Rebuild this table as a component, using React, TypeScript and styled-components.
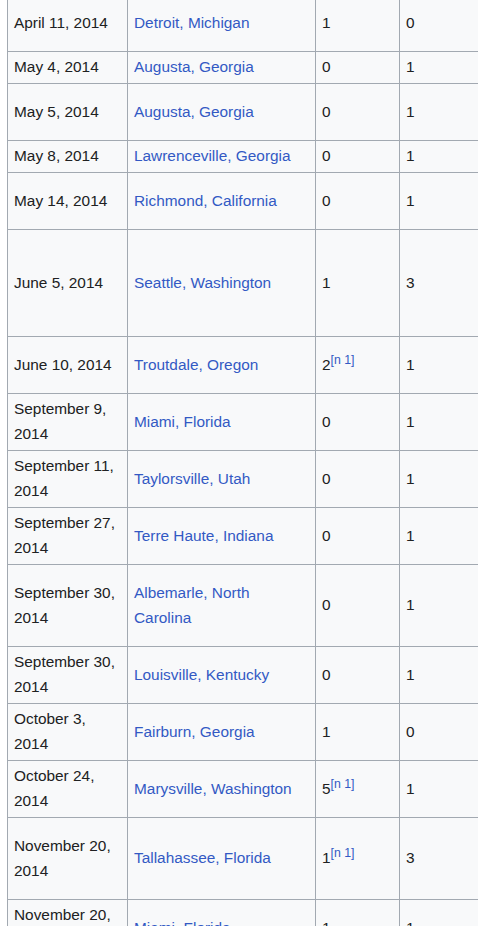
import React from 'react';
import styled, { createGlobalStyle } from 'styled-components';

const colorPalette = {
  text: '#202122',
  link: '#3359c4',
  cell: '#f8f9fa',
  border: '#a2a9b1',
};

type Incident = {
  date: string;
  place: string;
  killed: number;
  killedNote?: boolean;
  injured: number;
  height: number;
};

const incidents: Incident[] = [
  { date: 'April 11, 2014', place: 'Detroit, Michigan', killed: 1, injured: 0, height: 57 },
  { date: 'May 4, 2014', place: 'Augusta, Georgia', killed: 0, injured: 1, height: 32 },
  { date: 'May 5, 2014', place: 'Augusta, Georgia', killed: 0, injured: 1, height: 57 },
  { date: 'May 8, 2014', place: 'Lawrenceville, Georgia', killed: 0, injured: 1, height: 32 },
  { date: 'May 14, 2014', place: 'Richmond, California', killed: 0, injured: 1, height: 57 },
  { date: 'June 5, 2014', place: 'Seattle, Washington', killed: 1, injured: 3, height: 107 },
  { date: 'June 10, 2014', place: 'Troutdale, Oregon', killed: 2, killedNote: true, injured: 1, height: 57 },
  { date: 'September 9, 2014', place: 'Miami, Florida', killed: 0, injured: 1, height: 57 },
  { date: 'September 11, 2014', place: 'Taylorsville, Utah', killed: 0, injured: 1, height: 57 },
  { date: 'September 27, 2014', place: 'Terre Haute, Indiana', killed: 0, injured: 1, height: 57 },
  { date: 'September 30, 2014', place: 'Albemarle, North Carolina', killed: 0, injured: 1, height: 82 },
  { date: 'September 30, 2014', place: 'Louisville, Kentucky', killed: 0, injured: 1, height: 57 },
  { date: 'October 3, 2014', place: 'Fairburn, Georgia', killed: 1, injured: 0, height: 57 },
  { date: 'October 24, 2014', place: 'Marysville, Washington', killed: 5, killedNote: true, injured: 1, height: 57 },
  { date: 'November 20, 2014', place: 'Tallahassee, Florida', killed: 1, killedNote: true, injured: 3, height: 82 },
  { date: 'November 20, 2014', place: 'Miami, Florida', killed: 1, injured: 1, height: 57 },
];

const GlobalStyle = createGlobalStyle`
  html, body {
    margin: 0;
    padding: 0;
    background: #ffffff;
  }
`;

export default function App() {
  return (
    <>
      <GlobalStyle />
      <Viewport>
        <Table>
          <colgroup>
            <col style={{ width: 120 }} />
            <col style={{ width: 188 }} />
            <col style={{ width: 84 }} />
            <col style={{ width: 140 }} />
          </colgroup>
          <tbody>
            {incidents.map((incident, index) => (
              <Row key={index} $height={incident.height}>
                <Cell>{incident.date}</Cell>
                <Cell>
                  <WikiLink href="#">{incident.place}</WikiLink>
                </Cell>
                <Cell>
                  {incident.killed}
                  {incident.killedNote && (
                    <Reference>
                      <WikiLink href="#">[n 1]</WikiLink>
                    </Reference>
                  )}
                </Cell>
                <Cell>{incident.injured}</Cell>
              </Row>
            ))}
          </tbody>
        </Table>
      </Viewport>
    </>
  );
}

const Viewport = styled.div`
  width: 478px;
  height: 926px;
  overflow: hidden;
  padding-left: 7px;
  box-sizing: border-box;
  background: #ffffff;
`;

const Table = styled.table`
  margin-top: -6px;
  width: 532px;
  table-layout: fixed;
  border-collapse: collapse;

  background: ${colorPalette.cell};
  color: ${colorPalette.text};
  font-family: 'Liberation Sans', Arial, sans-serif;
  font-size: 15.4px;
  line-height: 25px;
`;

const Row = styled.tr<{ $height: number }>`
  height: ${({ $height }) => $height}px;
`;

const Cell = styled.td`
  padding: 2px 6px 4px;
  border: 1px solid ${colorPalette.border};
  vertical-align: middle;
  text-align: left;
`;

const WikiLink = styled.a`
  color: ${colorPalette.link};
  text-decoration: none;
`;

const Reference = styled.sup`
  font-size: 80%;
  line-height: 1;
  vertical-align: super;
`;
